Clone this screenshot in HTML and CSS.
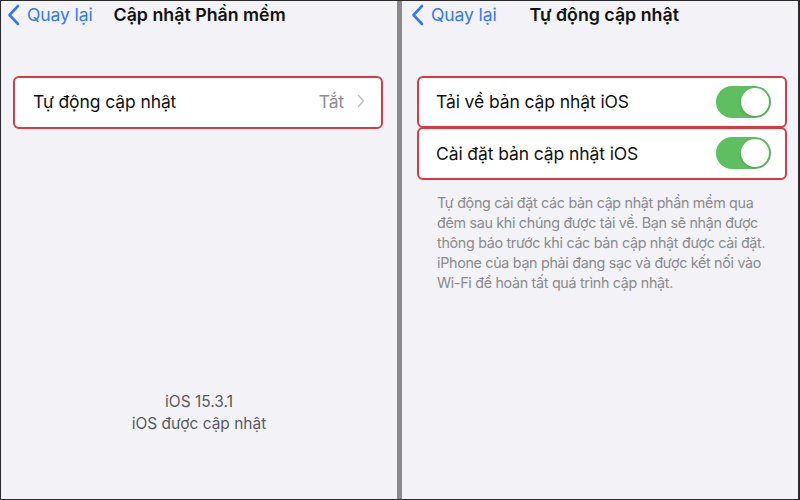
FILE: index.html
```html
<!DOCTYPE html>
<html lang="vi">
<head>
<meta charset="utf-8">
<link rel="stylesheet" href="styles.css">
</head>
<body>
<div class="frame">
  <section class="panel left">
    <header class="nav">
      <span class="back">
        <svg class="chev" width="13" height="22" viewBox="0 0 13 22"><path d="M11 2 L2.5 11 L11 20" fill="none" stroke="#3478f6" stroke-width="2.6" stroke-linecap="round" stroke-linejoin="round"/></svg>
        <span>Quay lại</span>
      </span>
      <span class="title title-left">Cập nhật Phần mềm</span>
    </header>
    <div class="row row-left">
      <span class="label">Tự động cập nhật</span>
      <span class="value">Tắt
        <svg class="disc" width="8" height="14" viewBox="0 0 8 14"><path d="M1.5 1.5 L6.5 7 L1.5 12.5" fill="none" stroke="#c4c4c7" stroke-width="1.8" stroke-linecap="round" stroke-linejoin="round"/></svg>
      </span>
    </div>
    <div class="version">
      <div>iOS 15.3.1</div>
      <div>iOS được cập nhật</div>
    </div>
  </section>
  <div class="divider"></div>
  <section class="panel right">
    <header class="nav">
      <span class="back">
        <svg class="chev" width="13" height="22" viewBox="0 0 13 22"><path d="M11 2 L2.5 11 L11 20" fill="none" stroke="#3478f6" stroke-width="2.6" stroke-linecap="round" stroke-linejoin="round"/></svg>
        <span>Quay lại</span>
      </span>
      <span class="title title-right">Tự động cập nhật</span>
    </header>
    <div class="group">
      <div class="row row-right first">
        <span class="label">Tải về bản cập nhật iOS</span>
        <span class="toggle"><span class="knob"></span></span>
      </div>
      <div class="row row-right second">
        <span class="label">Cài đặt bản cập nhật iOS</span>
        <span class="toggle"><span class="knob"></span></span>
      </div>
    </div>
    <p class="footer">Tự động cài đặt các bản cập nhật phần mềm qua<br>đêm sau khi chúng được tải về. Bạn sẽ nhận được<br>thông báo trước khi các bản cập nhật được cài đặt.<br>iPhone của bạn phải đang sạc và được kết nối vào<br>Wi-Fi để hoàn tất quá trình cập nhật.</p>
  </section>
</div>
</body>
</html>
```

FILE: styles.css
```css
* { box-sizing: border-box; }
html, body { margin: 0; padding: 0; }
body {
  width: 800px;
  height: 500px;
  font-family: Inter, "Noto Sans", sans-serif;
  background: #f2f2f7;
}
.frame {
  width: 800px;
  height: 500px;
  display: flex;
  border: 1px solid #2a2a2a;
  border-right-width: 2px;
  background: #f2f2f7;
}
.panel {
  display: flex;
  flex-direction: column;
  background: #f2f2f7;
}
.left { width: 396px; }
.right { flex: 1; }
.divider {
  width: 5px;
  background: #8b8b8b;
}
.nav {
  height: 27px;
  display: flex;
  align-items: center;
  padding-left: 6px;
}
.back {
  display: flex;
  align-items: center;
  gap: 7px;
  color: #3478f6;
  font-size: 17.5px;
  letter-spacing: -0.1px;
}
.title {
  color: #111;
  font-weight: 600;
  font-size: 17.8px;
  letter-spacing: 0;
}
.title-left { margin-left: 21px; }
.right .nav { padding-left: 9px; }
.title-right { margin-left: 33px; }
.row {
  background: #fff;
  border: 2px solid #d83a3f;
  border-radius: 6px;
  display: flex;
  align-items: center;
  justify-content: space-between;
  font-size: 17.5px;
  color: #111;
  letter-spacing: -0.1px;
}
.row-left {
  margin: 48px 14px 0 12px;
  height: 53px;
  padding: 0 16px 3px 18px;
}
.value {
  display: flex;
  align-items: center;
  gap: 13px;
  color: #8e8e93;
}
.version {
  margin-top: auto;
  margin-bottom: 64px;
  text-align: center;
  color: #5a5a5e;
  font-size: 15.5px;
  line-height: 22px;
}
.group {
  margin: 48px 11px 0 15px;
}
.row-right {
  padding: 0 14px 1px 17px;
}
.first { height: 52px; }
.second { height: 53px; margin-top: -1px; }
.toggle {
  width: 55px;
  height: 32px;
  border-radius: 16px;
  background: #5dbf60;
  display: flex;
  align-items: center;
  justify-content: flex-end;
  padding-right: 2px;
}
.knob {
  width: 28px;
  height: 28px;
  border-radius: 50%;
  background: #fff;
  box-shadow: 0 1px 3px rgba(0,0,0,0.2);
}
.footer {
  margin: 13px 0 0 35px;
  font-size: 14.3px;
  line-height: 20px;
  color: #8a8a8e;
  letter-spacing: -0.3px;
}
```
